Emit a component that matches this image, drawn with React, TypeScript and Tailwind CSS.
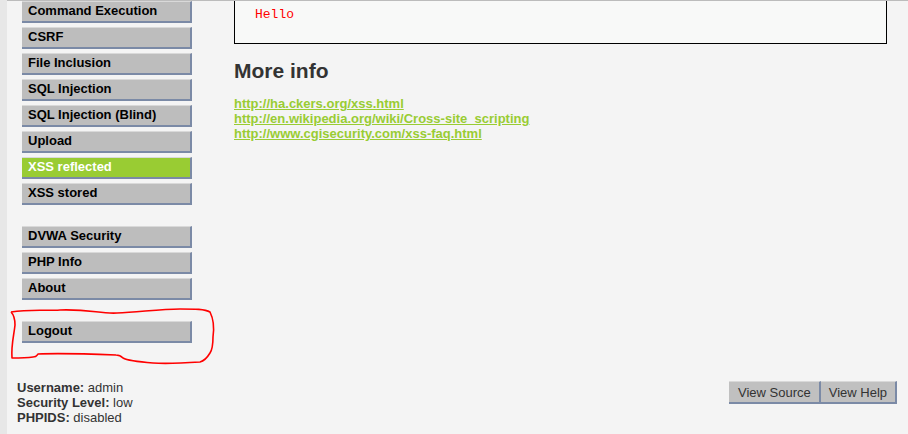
import React from 'react';

const topMenu = [
    'Command Execution',
    'CSRF',
    'File Inclusion',
    'SQL Injection',
    'SQL Injection (Blind)',
    'Upload',
    'XSS reflected',
    'XSS stored',
];

const adminMenu = ['DVWA Security', 'PHP Info', 'About'];

const links = [
    'http://ha.ckers.org/xss.html',
    'http://en.wikipedia.org/wiki/Cross-site_scripting',
    'http://www.cgisecurity.com/xss-faq.html',
];

function MenuItem({ label, active }: { label: string; active?: boolean }) {
    return (
        <li
            className={
                'h-[22px] border-t border-t-[#d9d9d9] border-r-2 border-b-2 border-r-[#7b8aa6] border-b-[#7b8aa6] pl-[6px] pt-px text-[13px] font-bold leading-[15px] ' +
                (active ? 'bg-[#99cc33] text-white' : 'bg-[#bdbdbd] text-black')
            }
        >
            {label}
        </li>
    );
}

export default function App() {
    return (
        <div
            className="relative flex h-[434px] w-[908px] overflow-hidden bg-[#f4f4f4] text-[#333]"
            style={{ fontFamily: '"Liberation Sans", Arial, sans-serif' }}
        >
            {/* left edge strip */}
            <div className="w-[7px] shrink-0 bg-[#e7e7e7]" />

            <div className="flex flex-1 flex-col border-t border-t-[#bcbcbc]">
                <div className="flex">
                    {/* Sidebar menu */}
                    <nav className="w-[227px] shrink-0 pl-[15px]">
                        <ul className="flex w-[170px] flex-col gap-[4px]">
                            {topMenu.map(item => (
                                <MenuItem key={item} label={item} active={item === 'XSS reflected'} />
                            ))}
                        </ul>
                        <ul className="mt-[21px] flex w-[170px] flex-col gap-[4px]">
                            {adminMenu.map(item => (
                                <MenuItem key={item} label={item} />
                            ))}
                        </ul>
                        <ul className="mt-[21px] flex w-[170px] flex-col">
                            <MenuItem label="Logout" />
                        </ul>
                    </nav>

                    {/* Main body */}
                    <main className="flex-1 pr-[21px]">
                        <div className="h-[43px] border-x border-b border-black bg-[#f8f9f8] pl-[20px] pt-[6px]">
                            <pre
                                className="text-[13px] leading-[15px] text-[#ff0000]"
                                style={{ fontFamily: '"Liberation Mono", "DejaVu Sans Mono", monospace' }}
                            >
                                Hello
                            </pre>
                        </div>
                        <h2 className="mt-[15px] text-[21px] font-bold leading-[24px] text-[#333]">More info</h2>
                        <ul className="mt-[13px] flex flex-col">
                            {links.map(link => (
                                <li key={link} className="text-[13px] font-bold leading-[15px]">
                                    <a className="text-[#99cc33] underline" href="#">
                                        {link}
                                    </a>
                                </li>
                            ))}
                        </ul>
                    </main>
                </div>

                {/* Footer: user info + view buttons */}
                <div className="mt-[37px] flex items-start justify-between pr-[11px]">
                    <div className="pl-[10px] text-[13px] leading-[15px] text-[#333]">
                        <div><b>Username:</b> admin</div>
                        <div><b>Security Level:</b> low</div>
                        <div><b>PHPIDS:</b> disabled</div>
                    </div>
                    <div className="mt-px flex">
                        <button className="h-[23px] border-t border-t-[#d9d9d9] border-r-2 border-b-2 border-r-[#7b8aa6] border-b-[#7b8aa6] bg-[#c0c0c0] pl-[9px] pr-[8px] text-[13px] leading-[15px] text-[#333]">
                            View Source
                        </button>
                        <button className="h-[23px] border-t border-t-[#d9d9d9] border-r-2 border-b-2 border-r-[#7b8aa6] border-b-[#7b8aa6] bg-[#c0c0c0] pl-[8px] pr-[8px] text-[13px] leading-[15px] text-[#333]">
                            View Help
                        </button>
                    </div>
                </div>
            </div>

            {/* red hand-drawn mark around Logout */}
            <svg className="pointer-events-none absolute left-0 top-0" width="908" height="434">
                <path
                    d="M11 312 C30 309 45 311 60 310 C90 309 100 314 117 313 C140 312 160 309 180 309 C195 309 205 309 210 312 C214 320 214 330 213 337 C213 345 212 350 210 353 C207 358 204 361 200 362 C185 363 165 364 153 363 C140 362 128 361 123 358 C121 356 120 355 116 355 C90 354 60 353 38 354 C37 355 37 357 33 357 C26 358 18 358 12 358 C11 345 14 335 15 325 C15 318 13 314 11 312"
                    fill="none"
                    stroke="#ff0000"
                    strokeWidth="1.6"
                    strokeLinejoin="round"
                />
            </svg>
        </div>
    );
}
